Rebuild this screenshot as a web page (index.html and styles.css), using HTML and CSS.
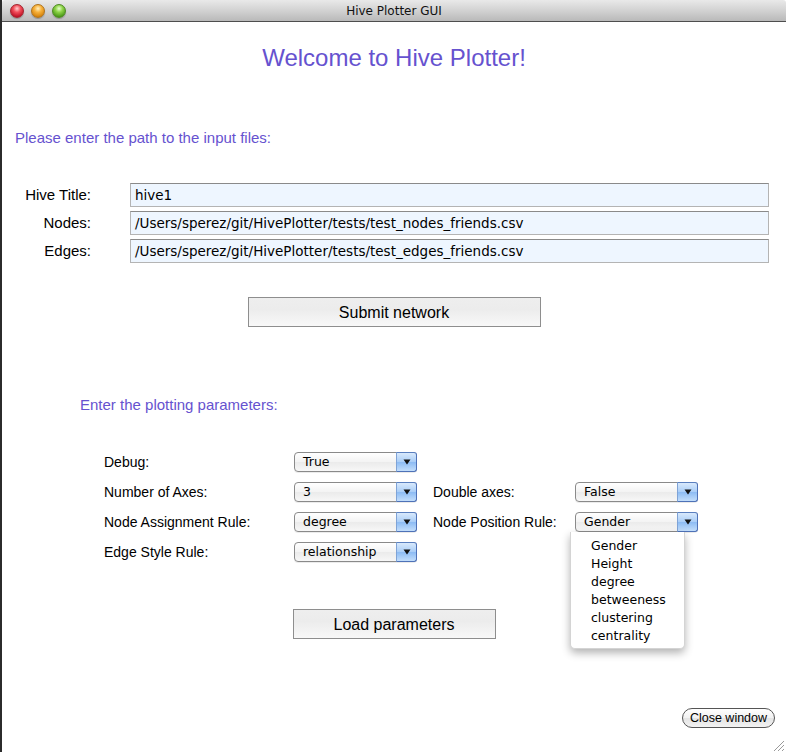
FILE: index.html
```html
<!DOCTYPE html>
<html>
<head>
<meta charset="utf-8">
<title>Hive Plotter GUI</title>
<link rel="stylesheet" href="styles.css">
</head>
<body>
<div class="window">
  <div class="titlebar">
    <div class="lights">
      <span class="light red"></span>
      <span class="light yellow"></span>
      <span class="light green"></span>
    </div>
    <div class="title">Hive Plotter GUI</div>
  </div>
  <div class="content">
    <h1 class="welcome">Welcome to Hive Plotter!</h1>
    <p class="section-head files-head">Please enter the path to the input files:</p>
    <div class="files">
      <label class="flabel">Hive Title:</label>
      <div class="field">hive1</div>
      <label class="flabel">Nodes:</label>
      <div class="field">/Users/sperez/git/HivePlotter/tests/test_nodes_friends.csv</div>
      <label class="flabel">Edges:</label>
      <div class="field">/Users/sperez/git/HivePlotter/tests/test_edges_friends.csv</div>
    </div>
    <div class="btn-row submit-row"><button class="btn submit">Submit network</button></div>
    <p class="section-head params-head">Enter the plotting parameters:</p>
    <div class="params">
      <span class="plabel">Debug:</span>
      <div class="select"><span class="val">True</span><span class="arrow"><svg width="8" height="6" viewBox="0 0 8 6"><path d="M0.5 0.5 H7.5 L4 5.5 Z" fill="#111"/></svg></span></div>
      <span></span><span></span><span></span>

      <span class="plabel">Number of Axes:</span>
      <div class="select"><span class="val">3</span><span class="arrow"><svg width="8" height="6" viewBox="0 0 8 6"><path d="M0.5 0.5 H7.5 L4 5.5 Z" fill="#111"/></svg></span></div>
      <span></span>
      <span class="plabel">Double axes:</span>
      <div class="select"><span class="val">False</span><span class="arrow"><svg width="8" height="6" viewBox="0 0 8 6"><path d="M0.5 0.5 H7.5 L4 5.5 Z" fill="#111"/></svg></span></div>

      <span class="plabel">Node Assignment Rule:</span>
      <div class="select"><span class="val">degree</span><span class="arrow"><svg width="8" height="6" viewBox="0 0 8 6"><path d="M0.5 0.5 H7.5 L4 5.5 Z" fill="#111"/></svg></span></div>
      <span></span>
      <span class="plabel">Node Position Rule:</span>
      <div class="select open"><span class="val">Gender</span><span class="arrow"><svg width="8" height="6" viewBox="0 0 8 6"><path d="M0.5 0.5 H7.5 L4 5.5 Z" fill="#111"/></svg></span>
        <ul class="menu">
          <li>Gender</li>
          <li>Height</li>
          <li>degree</li>
          <li>betweeness</li>
          <li>clustering</li>
          <li>centrality</li>
        </ul>
      </div>

      <span class="plabel">Edge Style Rule:</span>
      <div class="select"><span class="val">relationship</span><span class="arrow"><svg width="8" height="6" viewBox="0 0 8 6"><path d="M0.5 0.5 H7.5 L4 5.5 Z" fill="#111"/></svg></span></div>
      <span></span><span></span><span></span>
    </div>
    <div class="btn-row load-row"><button class="btn load">Load parameters</button></div>
    <div class="close-row"><button class="pill">Close window</button></div>
  </div>
  <svg class="grip" width="14" height="14" viewBox="0 0 14 14">
    <path d="M13 3 L3 13 M13 7 L7 13 M13 11 L11 13" stroke="#9a9a9a" stroke-width="1"/>
  </svg>
</div>
</body>
</html>
```

FILE: styles.css
```css
html, body {
  margin: 0;
  padding: 0;
  background: #2b2b2b;
}
body {
  width: 786px;
  height: 752px;
  overflow: hidden;
}
.window {
  position: relative;
  width: 784px;
  height: 752px;
  margin-left: 2px;
  background: #ffffff;
  font-family: "Liberation Sans", Arial, sans-serif;
  color: #000;
}
.titlebar {
  position: relative;
  height: 21px;
  border-bottom: 1px solid #4e4e4e;
  background: linear-gradient(#e9e9e9, #d2d2d2 50%, #b9b9b9);
  border-radius: 3px 3px 0 0;
  display: flex;
  align-items: center;
  justify-content: center;
}
.lights {
  position: absolute;
  left: 8px;
  top: 4px;
  display: flex;
  gap: 7px;
}
.light {
  width: 14px;
  height: 14px;
  border-radius: 50%;
  box-sizing: border-box;
  box-shadow: 0 1px 1px rgba(0,0,0,0.25);
}
.red {
  background: radial-gradient(circle at 50% 30%, #ffd0d0 0, #f24f5b 35%, #c3162a 75%, #8d0c18 100%);
  border: 1px solid #a3242e;
}
.yellow {
  background: radial-gradient(circle at 50% 30%, #fff0c0 0, #f7b23d 35%, #d8860f 75%, #a45f06 100%);
  border: 1px solid #b0731b;
}
.green {
  background: radial-gradient(circle at 50% 30%, #e8ffd0 0, #8fd449 35%, #4f9d1b 75%, #336c0e 100%);
  border: 1px solid #4e8a22;
}
.title {
  font-family: "DejaVu Sans", sans-serif;
  font-size: 12px;
  color: #111;
  padding-top: 1px;
}
.content {
  display: flex;
  flex-direction: column;
}
.welcome {
  margin: 22px 0 0;
  text-align: center;
  font-size: 24px;
  line-height: 28px;
  font-weight: normal;
  color: #6652cf;
}
.section-head {
  margin: 0;
  font-size: 15px;
  line-height: 20px;
  color: #6652cf;
}
.files-head {
  margin-top: 56px;
  margin-left: 13px;
}
.files {
  margin-top: 35px;
  display: grid;
  grid-template-columns: 89px 639px;
  column-gap: 39px;
  row-gap: 4px;
}
.flabel {
  text-align: right;
  font-size: 15px;
  line-height: 24px;
}
.field {
  box-sizing: border-box;
  height: 24px;
  background: #eef6ff;
  border: 1px solid #b4b4b4;
  border-top-color: #8a8a8a;
  font-family: "DejaVu Sans", sans-serif;
  font-size: 13.5px;
  line-height: 23px;
  padding-left: 4px;
  color: #000;
}
.btn-row {
  display: flex;
  justify-content: center;
}
.submit-row { margin-top: 34px; }
.btn {
  box-sizing: border-box;
  height: 30px;
  border: 1px solid #8e8e8e;
  background: linear-gradient(#eeeeee, #ececec 40%, #f4f4f4 80%, #f8f8f8);
  font-family: "Liberation Sans", Arial, sans-serif;
  font-size: 16px;
  line-height: 30px;
  color: #000;
  padding: 0 0 0 0;
  margin: 0;
  border-radius: 0;
}
.submit { width: 293px; }
.load { width: 203px; }
.params-head {
  margin-top: 68px;
  margin-left: 78px;
}
.params {
  margin-top: 37px;
  margin-left: 102px;
  display: grid;
  grid-template-columns: 190px 123px 16px 142px 123px;
  grid-auto-rows: 20px;
  row-gap: 10px;
  align-items: center;
}
.plabel {
  font-size: 14px;
  line-height: 20px;
}
.select {
  position: relative;
  box-sizing: border-box;
  width: 123px;
  height: 20px;
  border: 1px solid #8a8a8a;
  border-radius: 4px;
  background: linear-gradient(#ffffff, #f3f3f3 50%, #ebebeb 52%, #f7f7f7);
  display: flex;
  box-shadow: 0 1px 0 rgba(0,0,0,0.08);
}
.val {
  flex: 1;
  font-family: "DejaVu Sans", sans-serif;
  font-size: 12.5px;
  line-height: 18px;
  padding-left: 8px;
}
.arrow {
  width: 19px;
  display: flex;
  align-items: center;
  justify-content: center;
  border-left: 1px solid #7fa3d6;
  border-radius: 0 3px 3px 0;
  background: linear-gradient(#d8e9fc, #a9cdf7 50%, #8dbcf4 52%, #c3defb);
  margin: -1px -1px -1px 0;
  border-top: 1px solid #5a7fbf;
  border-right: 1px solid #4e72b8;
  border-bottom: 1px solid #4e72b8;
}
.menu {
  position: absolute;
  top: calc(100% + 1px);
  left: -6px;
  width: 115px;
  box-sizing: border-box;
  margin: 0;
  padding: 5px 0 3px 20px;
  list-style: none;
  background: #fff;
  border: 1px solid #d4d4d4;
  border-top: none;
  border-radius: 0 0 5px 5px;
  box-shadow: 0 4px 9px rgba(0,0,0,0.3);
  z-index: 5;
}
.menu li {
  font-family: "DejaVu Sans", sans-serif;
  font-size: 12.5px;
  line-height: 18px;
  color: #000;
}
.load-row { margin-top: 47px; }
.close-row {
  margin-top: 69px;
  display: flex;
  justify-content: flex-end;
  padding-right: 11px;
}
.pill {
  box-sizing: border-box;
  width: 93px;
  height: 20px;
  border: 1px solid #555;
  border-radius: 10px;
  background: linear-gradient(#ffffff, #f1f1f1 50%, #e4e4e4 52%, #f2f2f2);
  font-family: "Liberation Sans", Arial, sans-serif;
  font-size: 12.5px;
  line-height: 18px;
  padding: 0;
  color: #000;
}
.grip {
  position: absolute;
  right: 1px;
  bottom: 0;
}
```
